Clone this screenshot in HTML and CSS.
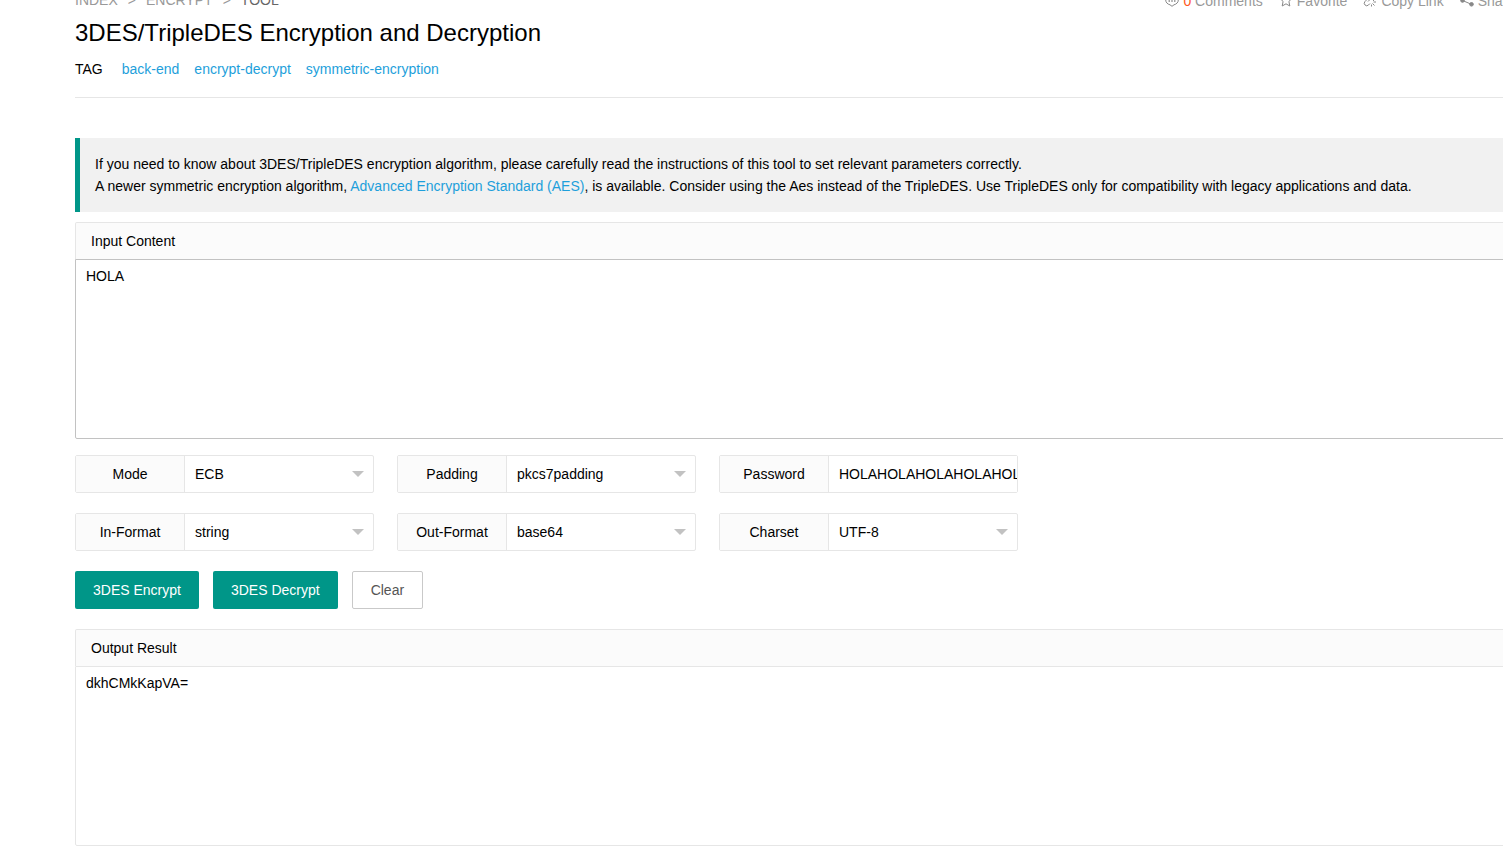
FILE: index.html
```html
<!DOCTYPE html>
<html lang="en">
<head>
<meta charset="utf-8">
<title>3DES/TripleDES Encryption and Decryption</title>
<link rel="stylesheet" href="styles.css">
</head>
<body>
<main class="page">
  <div class="topbar">
    <nav class="crumbs" aria-label="Breadcrumb">
      <a href="#">INDEX</a><span>&gt;</span><a href="#">ENCRYPT</a><span>&gt;</span><span class="current">TOOL</span>
    </nav>
    <div class="actions">
      <a href="#"><svg class="icon" viewBox="0 0 14 14"><path d="M5 11.800C2.500 11.200 0.700 9.400 0.700 7C0.700 4 3.500 1.800 7 1.800S13.300 4 13.300 7C13.300 9.400 11.500 11.200 9 11.800L7 13.300Z"/><path d="M3.500 8h1.500M6.250 8h1.500M9 8h1.500" stroke-width="1.500"/></svg><span><b class="count">0</b> Comments</span></a>
      <a href="#"><svg class="icon" viewBox="0 0 14 14"><path d="M7 1.200L8.800 5L13 5.500L9.900 8.400L10.800 13L7 10.800L3.200 13L4.100 8.400L1 5.500L5.200 5Z"/></svg><span>Favorite</span></a>
      <a href="#"><svg class="icon" viewBox="0 0 14 14"><path d="M6 4L8 2a2.600 2.600 0 0 1 4 4L10 8M4.500 6L2 8.500a2.400 2.400 0 0 0 3.500 3.500L7 10.500M5 8.500L7 6.500M9.500 10.500l2 2M10.500 9h2.500M8.500 11.500v2M4.500 3.500l-2-2M3.500 5H1"/></svg><span>Copy Link</span></a>
      <a href="#"><svg class="icon solid" viewBox="0 0 14 14"><path d="M2.500 7.500L11.500 3.500M2.500 7.500L11.500 11.300"/><circle cx="2.500" cy="7.500" r="1.800"/><circle cx="11.500" cy="3.500" r="1.800"/><circle cx="11.500" cy="11.300" r="1.800"/></svg><span>Share</span></a>
    </div>
  </div>
  <h1 class="title">3DES/TripleDES Encryption and Decryption</h1>
  <div class="tags">
    <span class="tags-label">TAG</span>
    <a href="#">back-end</a>
    <a href="#">encrypt-decrypt</a>
    <a href="#">symmetric-encryption</a>
  </div>
  <div class="notice">
    <p>If you need to know about 3DES/TripleDES encryption algorithm, please carefully read the instructions of this tool to set relevant parameters correctly.</p>
    <p>A newer symmetric encryption algorithm, <a href="#">Advanced Encryption Standard (AES)</a>, is available. Consider using the Aes instead of the TripleDES. Use TripleDES only for compatibility with legacy applications and data.</p>
  </div>
  <form class="tool">
    <div class="block">
      <label class="block-head" for="input">Input Content</label>
      <textarea class="area" id="input">HOLA</textarea>
    </div>
    <div class="fields">
      <div class="field"><label for="mode">Mode</label><select id="mode"><option>ECB</option></select></div>
      <div class="field"><label for="padding">Padding</label><select id="padding"><option>pkcs7padding</option></select></div>
      <div class="field"><label for="password">Password</label><input id="password" type="text" value="HOLAHOLAHOLAHOLAHOLAHOLA"></div>
      <div class="field"><label for="informat">In-Format</label><select id="informat"><option>string</option></select></div>
      <div class="field"><label for="outformat">Out-Format</label><select id="outformat"><option>base64</option></select></div>
      <div class="field"><label for="charset">Charset</label><select id="charset"><option>UTF-8</option></select></div>
    </div>
    <div class="buttons">
      <button type="button" class="btn">3DES Encrypt</button>
      <button type="button" class="btn">3DES Decrypt</button>
      <button type="button" class="btn plain">Clear</button>
    </div>
    <div class="block result">
      <label class="block-head" for="output">Output Result</label>
      <textarea class="area" id="output" readonly>dkhCMkKapVA=</textarea>
    </div>
  </form>
</main>
</body>
</html>
```
FILE: styles.css
```css
* {
  box-sizing: border-box;
}

body {
  margin: 0;
  overflow: hidden;
  background: #fff;
  color: #000;
  font: 14px/22px "Liberation Sans", Arial, sans-serif;
}

a {
  color: #1e9fdb;
  text-decoration: none;
}

/* The page starts scrolled a little down and to the left. */
.page {
  margin: -11px -12px 0 75px;
}

.topbar {
  display: flex;
  justify-content: space-between;
  height: 24px;
}

.crumbs {
  display: flex;
  gap: 10px;
  color: #999;
}

.crumbs a {
  color: #999;
}

.crumbs .current {
  color: #666;
}

.actions {
  display: flex;
  align-items: flex-start;
  gap: 16px;
  padding-top: 1px;
}

.actions a {
  display: flex;
  align-items: center;
  gap: 4px;
  color: #999;
}

.count {
  color: #ff5722;
  font-weight: normal;
}

.icon {
  width: 14px;
  height: 14px;
  margin-bottom: 2px;
  fill: none;
  stroke: #888;
  stroke-width: 1;
}

.icon.solid {
  fill: #888;
}

.title {
  margin: 4px 0 0;
  font-size: 24px;
  font-weight: normal;
  line-height: 32px;
}

.tags {
  display: flex;
  gap: 15px;
  padding: 9px 0 17px;
  border-bottom: 1px solid #e6e6e6;
}

.tags-label {
  margin-right: 4px;
}

.notice {
  margin: 40px 0 10px;
  padding: 15px;
  border-left: 5px solid #009688;
  background: #f1f1f1;
}

.notice p {
  margin: 0;
}

.block-head {
  display: block;
  padding: 7px 15px;
  border: 1px solid #e6e6e6;
  border-bottom: 0;
  border-radius: 2px 2px 0 0;
  background: #fbfbfb;
}

.area {
  display: block;
  width: 100%;
  height: 180px;
  padding: 5px 10px;
  border: 1px solid #c2c2c2;
  border-radius: 0 0 2px 2px;
  background: #fff;
  color: #000;
  font: inherit;
  resize: none;
  outline: 0;
}

.result .area {
  border-color: #e6e6e6;
}

.fields {
  display: grid;
  grid-template-columns: repeat(3, 299px);
  gap: 20px 23px;
  margin: 16px 0 20px;
}

.field {
  display: flex;
  height: 38px;
  border: 1px solid #e6e6e6;
  border-radius: 2px;
}

.field label {
  width: 109px;
  border-right: 1px solid #e6e6e6;
  background: #fbfbfb;
  line-height: 36px;
  text-align: center;
}

.field select,
.field input {
  flex: 1;
  min-width: 0;
  padding: 0 0 0 10px;
  border: 0;
  appearance: none;
  background: #fff;
  color: #000;
  font: inherit;
  outline: 0;
}

.field select {
  background: url("data:image/svg+xml,%3Csvg xmlns='http://www.w3.org/2000/svg' width='12' height='6'%3E%3Cpath d='M0 0h12L6 6z' fill='%23c2c2c2'/%3E%3C/svg%3E") no-repeat right 9px center;
}

.buttons {
  display: flex;
  gap: 14px;
  margin-bottom: 20px;
}

.btn {
  height: 38px;
  padding: 0 18px;
  border: 0;
  border-radius: 2px;
  background: #009688;
  color: #fff;
  font: inherit;
}

.btn.plain {
  border: 1px solid #c9c9c9;
  background: #fff;
  color: #555;
}
```
